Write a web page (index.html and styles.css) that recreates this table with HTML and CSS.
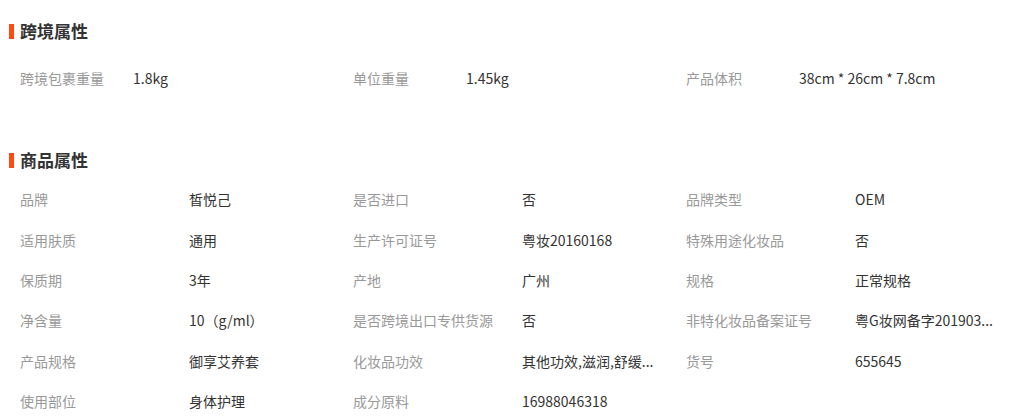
FILE: index.html
```html
<!DOCTYPE html>
<html lang="zh-CN">
<head>
  <meta charset="UTF-8" />
  <meta name="viewport" content="width=device-width, initial-scale=1.0"/>
  <title>商品属性</title>
  <link rel="stylesheet" href="styles.css">
</head>
<body>

  <div class="section cross">
    <h3 class="section-title">跨境属性</h3>
    <div class="attr-list">
      <div class="attr"><span class="label">跨境包裹重量</span><span class="value">1.8kg</span></div>
      <div class="attr"><span class="label">单位重量</span><span class="value">1.45kg</span></div>
      <div class="attr"><span class="label">产品体积</span><span class="value">38cm * 26cm * 7.8cm</span></div>
    </div>
  </div>

  <div class="section goods">
    <h3 class="section-title">商品属性</h3>
    <div class="attr-list">
      <div class="attr"><span class="label">品牌</span><span class="value">皙悦己</span></div>
      <div class="attr"><span class="label">是否进口</span><span class="value">否</span></div>
      <div class="attr"><span class="label">品牌类型</span><span class="value">OEM</span></div>

      <div class="attr"><span class="label">适用肤质</span><span class="value">通用</span></div>
      <div class="attr"><span class="label">生产许可证号</span><span class="value">粤妆20160168</span></div>
      <div class="attr"><span class="label">特殊用途化妆品</span><span class="value">否</span></div>

      <div class="attr"><span class="label">保质期</span><span class="value">3年</span></div>
      <div class="attr"><span class="label">产地</span><span class="value">广州</span></div>
      <div class="attr"><span class="label">规格</span><span class="value">正常规格</span></div>

      <div class="attr"><span class="label">净含量</span><span class="value">10（g/ml）</span></div>
      <div class="attr"><span class="label">是否跨境出口专供货源</span><span class="value">否</span></div>
      <div class="attr"><span class="label">非特化妆品备案证号</span><span class="value" title="粤G妆网备字2019031526">粤G妆网备字201903...</span></div>

      <div class="attr"><span class="label">产品规格</span><span class="value">御享艾养套</span></div>
      <div class="attr"><span class="label">化妆品功效</span><span class="value" title="其他功效,滋润,舒缓,保湿">其他功效,滋润,舒缓...</span></div>
      <div class="attr"><span class="label">货号</span><span class="value">655645</span></div>

      <div class="attr"><span class="label">使用部位</span><span class="value">身体护理</span></div>
      <div class="attr"><span class="label">成分原料</span><span class="value">16988046318</span></div>
    </div>
  </div>

</body>
</html>
```

FILE: styles.css
```css
body {
  margin: 0;
  padding-top: 21px;
  font-family: "Microsoft YaHei", "Noto Sans CJK SC", sans-serif;
  font-size: 14px;
  color: #333;
  background-color: #fff;
}
.section-title {
  margin: 0 0 0 9px;
  height: 20px;
  line-height: 20px;
  font-size: 17px;
  font-weight: bold;
  color: #333;
  display: flex;
  align-items: center;
}
.section-title::before {
  content: "";
  width: 5px;
  height: 15px;
  margin-right: 6px;
  background-color: #ff4a0f;
}
.attr-list {
  display: grid;
  grid-template-columns: repeat(3, 333px);
  padding-left: 20px;
}
.attr {
  display: flex;
  align-items: center;
  height: 40px;
  line-height: 20px;
}
.label {
  flex: none;
  color: #999;
}
.value {
  color: #333;
  white-space: nowrap;
}
.cross .attr-list {
  margin-top: 17px;
}
.cross .label {
  width: 113px;
}
.goods {
  margin-top: 52px;
}
.goods .attr-list {
  margin-top: 9px;
}
.goods .attr {
  height: 40.4px;
}
.goods .label {
  width: 169px;
}
```
